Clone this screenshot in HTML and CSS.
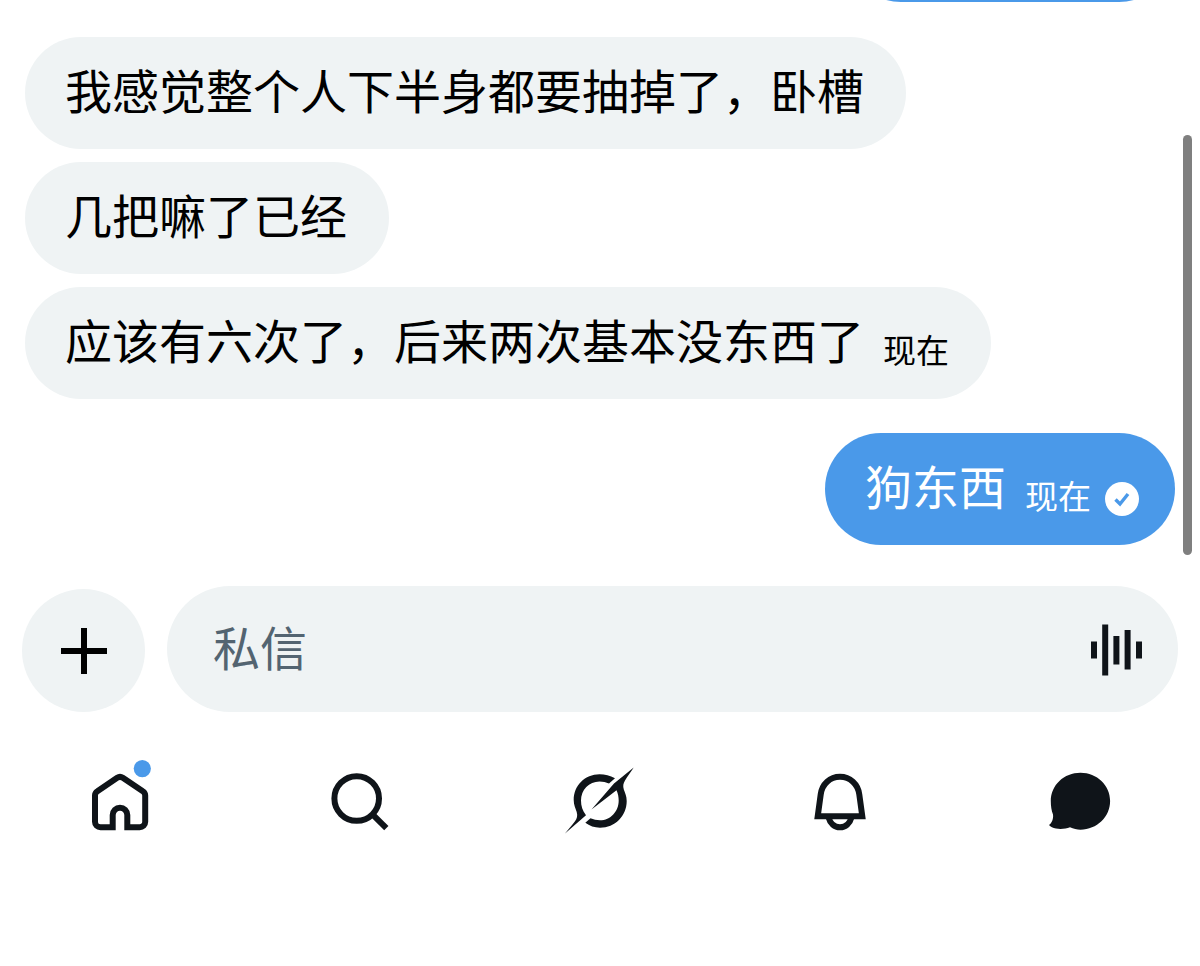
FILE: index.html
```
<!DOCTYPE html>
<html lang="zh-CN">
<head>
<meta charset="UTF-8" />
<meta name="viewport" content="width=device-width, initial-scale=1" />
<title>私信</title>
<link rel="stylesheet" href="styles.css">
</head>
<body>

<main class="chat">
  <div class="bubble sent previous"></div>
  <div class="bubble">我感觉整个人下半身都要抽掉了，卧槽</div>
  <div class="bubble">几把嘛了已经</div>
  <div class="bubble">应该有六次了，后来两次基本没东西了<span class="time">现在</span></div>
  <div class="bubble sent">狗东西<span class="time">现在</span>
    <svg class="check" viewBox="0 0 34 34">
      <circle cx="17" cy="17" r="17" fill="#fff" />
      <path d="M10.500 17.500l4.500 4.500 8-10" fill="none" stroke="#4a99e9" stroke-width="3.400" />
    </svg>
  </div>
  <div class="scrollbar"></div>
</main>

<form class="composer">
  <button type="button" class="add-btn" aria-label="添加">
    <svg width="46" height="46" viewBox="0 0 46 46"><path d="M0 23h46M23 0v46" stroke="#000" stroke-width="6" /></svg>
  </button>
  <div class="input-box">
    <input type="text" class="message-input" placeholder="私信" aria-label="私信" />
    <button type="button" class="voice-btn" aria-label="语音">
      <svg width="52" height="52" viewBox="0 0 52 52" fill="#0f1419">
        <path d="M0 17.500h6v17H0zM11.200 .5h6v51h-6zM22.400 12h6v28.500h-6zM33.600 6h6v39.500h-6zM45 17.500h6v17h-6z" />
      </svg>
    </button>
  </div>
</form>

<nav class="tabs">
  <a href="#" aria-label="主页">
    <svg class="icon" viewBox="0 0 80 80">
      <path class="line" d="M32.700 67.300H20.500a5.500 5.500 0 0 1-5.500-5.500V35.500a5 5 0 0 1 2.400-4.300L37.200 17.800a5 5 0 0 1 5.600 0L62.800 31.200a5 5 0 0 1 2.400 4.300V61.800a5.500 5.500 0 0 1-5.500 5.500H47.300V55a7.300 7.300 0 0 0-14.600 0z" />
      <circle cx="62.300" cy="8.600" r="8.600" fill="#4a99e9" />
    </svg>
  </a>
  <a href="#" aria-label="搜索">
    <svg class="icon" viewBox="0 0 80 80">
      <circle class="line" cx="36.700" cy="38.500" r="22.300" />
      <path class="line" d="M52.500 54.300L66.300 68.100" />
    </svg>
  </a>
  <a href="#" aria-label="Grok">
    <svg class="icon" viewBox="0 0 80 80">
      <path d="M55 18.300C50 15.500 45 14.300 39.500 14.300C25 14.300 13.700 25.500 13.700 40C13.700 45 15.500 48.500 16.700 52C17.800 56 17 58.500 15 61.300C12.500 65 8.500 69 5 73.500L26 55.300C22.500 50.500 21 46 21 40.500C21 30 29 21.500 39.500 21.500C43 21.500 46 22.200 49 23.600z" />
      <path d="M73.700 7.500L54 23.500L31.500 49.500L56.500 30.200C58 33.500 58.700 37 58.700 40.500C58.700 51.500 50.500 60.300 40 60.300C36.500 60.300 33.500 59.600 30.500 58.300L25.300 62.800C29.500 66 34.500 67.700 40 67.700C55 67.700 66.700 56 66.700 41C66.700 36 65 33 63.800 29.500C62.800 26 63.200 23.500 65 20.500C67.500 16 71 12 73.700 7.500z" />
    </svg>
  </a>
  <a href="#" aria-label="通知">
    <svg class="icon" viewBox="0 0 80 80">
      <path class="line" d="M17.700 56.300L20.700 34.500C22 24 30 16.800 40 16.800S58 24 59.300 34.500L62.300 56.300z" />
      <path class="line" d="M28.600 57.500c1.500 6 6 9.800 11.400 9.800s9.900-3.800 11.400-9.800" />
    </svg>
  </a>
  <a href="#" aria-label="私信">
    <svg class="icon" viewBox="0 0 80 80">
      <path d="M40.500 12.700c16.500 0 29.600 12.500 29.600 28.400S57 69.700 40.500 69.700c-3.600 0-7-.8-10.500-2.400-4 1.500-9 2-14 1.300-3-.5-5.500-1.700-7-3.500 2.800-2 4.600-6 4-10.500-1.500-4-2.200-8.500-2.200-13.600C10.800 25 24 12.700 40.500 12.700z" />
    </svg>
  </a>
</nav>

</body>
</html>
```
FILE: styles.css
```
* {
  box-sizing: border-box;
}

body {
  margin: 0;
  height: 100vh;
  display: flex;
  flex-direction: column;
  background-color: #fff;
  color: #000;
  font-family: "Noto Sans CJK SC", sans-serif;
  font-size: 47px;
}

button {
  border: none;
  padding: 0;
  background: none;
  cursor: pointer;
}

svg {
  display: block;
}

/* Newest message sits at the bottom, older ones run off the top */
.chat {
  position: relative;
  flex: 1;
  min-height: 0;
  overflow: hidden;
  display: flex;
  flex-direction: column;
  justify-content: flex-end;
  align-items: flex-start;
  gap: 13px;
  padding: 0 25px 41px;
}

.bubble {
  flex-shrink: 0;
  display: flex;
  align-items: center;
  height: 112px;
  padding: 0 42px 8px 40px;
  border-radius: 56px;
  background-color: #eff3f4;
  line-height: 72px;
  white-space: nowrap;
}

.sent {
  align-self: flex-end;
  margin-top: 21px;
  padding-right: 36px;
  background-color: #4a99e9;
  color: #fff;
}

.previous {
  width: 330px;
  margin: 0 0 22px;
}

.time {
  margin: 20px 0 0 19px;
  font-size: 33px;
  line-height: 48px;
}

.check {
  width: 34px;
  height: 34px;
  margin: 28px 0 0 14px;
}

.scrollbar {
  position: absolute;
  top: 135px;
  right: 8px;
  width: 9px;
  height: 420px;
  border-radius: 5px;
  background-color: #7f7f7f;
}

.composer {
  display: flex;
  align-items: flex-end;
  gap: 22px;
  padding: 0 22px;
}

.add-btn {
  display: flex;
  align-items: center;
  justify-content: center;
  width: 123px;
  height: 123px;
  border-radius: 50%;
  background-color: #eff3f4;
}

.input-box {
  flex: 1;
  display: flex;
  align-items: center;
  height: 126px;
  padding: 2px 35px 0 46px;
  border-radius: 63px;
  background-color: #eff3f4;
}

.message-input {
  flex: 1;
  min-width: 0;
  padding: 0 0 10px;
  border: none;
  outline: none;
  background: none;
  color: #000;
  font: inherit;
}

.message-input::placeholder {
  color: #536471;
  opacity: 1;
}

.tabs {
  display: flex;
  padding: 48px 0 126px;
}

.tabs a {
  flex: 1;
  display: flex;
  justify-content: center;
}

.icon {
  width: 80px;
  height: 80px;
  fill: #0f1419;
}

.line {
  fill: none;
  stroke: #0f1419;
  stroke-width: 6;
}
```
